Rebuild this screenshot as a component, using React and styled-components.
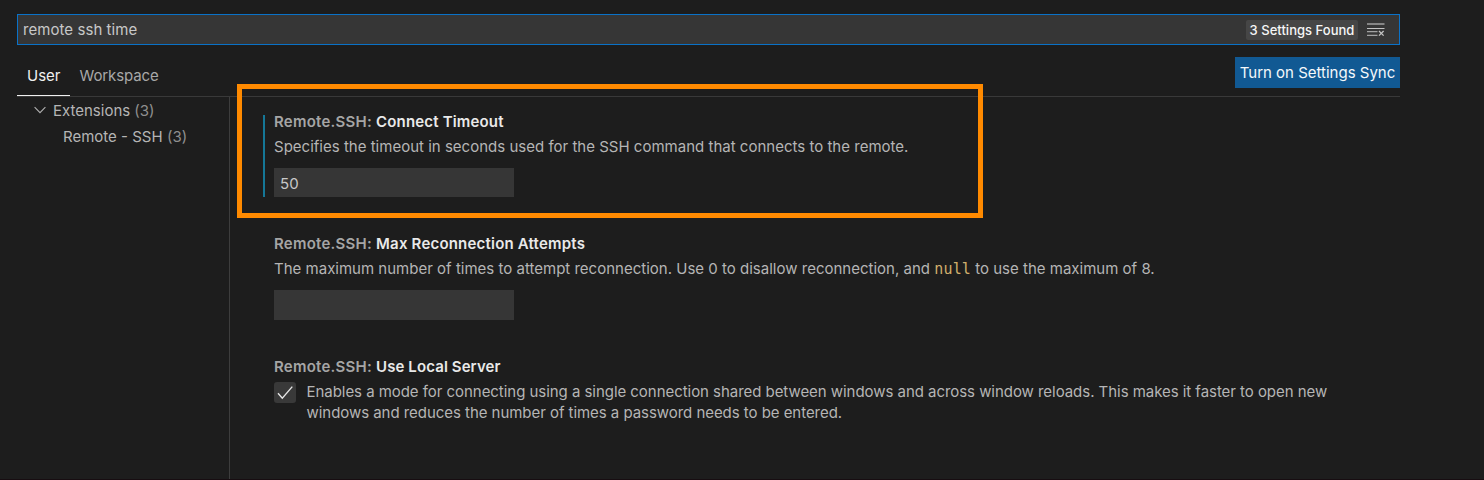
import React from "react";
import styled, { createGlobalStyle } from "styled-components";

const GlobalStyle = createGlobalStyle`
  *, *::before, *::after { box-sizing: border-box; }
  body {
    margin: 0;
    background: #1d1d1d;
    color: #b5b5b5;
    font: 400 15px/21px Inter, "Liberation Sans", sans-serif;
  }
`;

const Page = styled.div`
  position: relative;
  display: flex;
  flex-direction: column;
  width: 1484px;
  height: 480px;
  padding: 14px 84px 0 17px;
  overflow: hidden;
  border-bottom: 1px solid #170d11;
`;

const SearchBar = styled.div`
  display: flex;
  align-items: center;
  flex: none;
  height: 31px;
  padding: 0 14px 0 5px;
  background: #363636;
  border: 1px solid #0a72c8;
`;

const Query = styled.span`
  flex: 1;
  color: #c8c8c8;
  letter-spacing: 0.06px;
`;

const CountBadge = styled.span`
  width: 112px;
  height: 20px;
  margin-right: 9px;
  border-radius: 2px;
  background: #464646;
  color: #f6f6f6;
  font-size: 13px;
  font-weight: 500;
  line-height: 20px;
  letter-spacing: 0.02px;
  text-align: center;
  white-space: nowrap;
`;

const Header = styled.div`
  display: flex;
  justify-content: space-between;
  flex: none;
  height: 52px;
  padding-top: 12px;
  border-bottom: 1px solid #393939;
`;

const Tabs = styled.div`
  display: flex;
`;

const Tab = styled.div`
  height: 39px;
  padding: 8px ${(p) => (p.$active ? "10px" : "9px")} 0;
  letter-spacing: ${(p) => (p.$active ? "0" : "-0.1px")};
  color: ${(p) => (p.$active ? "#f0f0f0" : "#a8a8a8")};
  border-bottom: 1px solid ${(p) => (p.$active ? "#f0f0f0" : "transparent")};
`;

const SyncButton = styled.button`
  width: 165px;
  height: 31px;
  padding: 0;
  border: 0;
  background: #115993;
  color: #f4f8fb;
  font: inherit;
  white-space: nowrap;
`;

const Body = styled.div`
  display: flex;
  flex: 1;
`;

const Sidebar = styled.nav`
  width: 213px;
  border-right: 1px solid #3d3d3d;
`;

const TreeRow = styled.div`
  display: flex;
  align-items: center;
  height: 26px;
  padding-left: ${(p) => p.$indent}px;
  white-space: nowrap;
`;

const Chevron = styled.svg`
  width: 12px;
  height: 8px;
  margin-right: 7px;
`;

const Count = styled.span`
  margin-left: ${(p) => p.$gap || 4}px;
  color: #8f8f8f;
`;

const Settings = styled.main`
  flex: 1;
  padding: 14px 0 0 33px;
`;

const Setting = styled.section`
  display: flex;
  height: ${(p) => p.$height}px;
`;

const ModifiedMark = styled.div`
  width: 2px;
  height: 82px;
  margin: 4px 9px 0 0;
  background: ${(p) => (p.$on ? "#157797" : "transparent")};
`;

const Content = styled.div`
  flex: 1;
`;

const Title = styled.h3`
  margin: 0 0 4px;
  font-size: 15px;
  font-weight: 600;
  line-height: 21px;
  letter-spacing: 0.24px;
  color: #a5a5a5;
`;

const Name = styled.span`
  color: #e9e9e9;
  letter-spacing: ${(p) => p.$tracking}px;
`;

const Description = styled.p`
  margin: 0;
  letter-spacing: ${(p) => p.$tracking || 0}px;
  white-space: nowrap;
`;

const Code = styled.code`
  font: 15px/1 "DejaVu Sans Mono", monospace;
  letter-spacing: 0.15px;
  color: #d0ae6c;
`;

const Field = styled.div`
  width: 240px;
  height: ${(p) => p.$height}px;
  margin-top: 11px;
  padding: 5px 6px 0;
  background: #363636;
  color: #c8c8c8;
  letter-spacing: 0.2px;
`;

const CheckRow = styled.div`
  display: flex;
`;

const Checkbox = styled.div`
  display: flex;
  width: 22px;
  height: 21px;
  margin: 1px 10.5px 0 0;
  border-radius: 3px;
  background: #393939;
`;

const Highlight = styled.div`
  position: absolute;
  left: 237px;
  top: 84px;
  width: 746px;
  height: 134px;
  border: 5px solid #ff8a00;
  pointer-events: none;
`;

function ClearFilterIcon() {
  return (
    <svg width="18" height="14" viewBox="0 0 18 14" fill="none">
      <path d="M0 1h17.5" stroke="#858585" strokeWidth="2" />
      <path d="M0 5.5h17.5" stroke="#c2c2c2" />
      <path d="M0 8.7h10.5M0 12.3h10.5" stroke="#a2a2a2" strokeWidth="1.3" />
      <path d="M12 8l4.6 4.6M16.6 8l-4.6 4.6" stroke="#c4c4c4" strokeWidth="1.3" />
    </svg>
  );
}

function SettingTitle({ children, tracking = 0.17 }) {
  return (
    <Title>
      Remote.SSH: <Name $tracking={tracking}>{children}</Name>
    </Title>
  );
}

export default function App() {
  return (
    <>
      <GlobalStyle />
      <Page>
        <SearchBar>
          <Query>remote ssh time</Query>
          <CountBadge>3 Settings Found</CountBadge>
          <ClearFilterIcon />
        </SearchBar>
        <Header>
          <Tabs>
            <Tab $active>User</Tab>
            <Tab>Workspace</Tab>
          </Tabs>
          <SyncButton>Turn on Settings Sync</SyncButton>
        </Header>
        <Body>
          <Sidebar>
            <TreeRow $indent={17}>
              <Chevron viewBox="0 0 12 8" fill="none">
                <path d="M.6 1.2L6 6.7l5.4-5.5" stroke="#b0b0b0" strokeWidth="1.1" />
              </Chevron>
              Extensions<Count>(3)</Count>
            </TreeRow>
            <TreeRow $indent={46}>
              Remote - SSH<Count $gap={4.5}>(3)</Count>
            </TreeRow>
          </Sidebar>
          <Settings>
            <Setting $height={122}>
              <ModifiedMark $on />
              <Content>
                <SettingTitle>Connect Timeout</SettingTitle>
                <Description $tracking={0.01}>
                  Specifies the timeout in seconds used for the SSH command that connects to the remote.
                </Description>
                <Field $height={29}>50</Field>
              </Content>
            </Setting>
            <Setting $height={123}>
              <ModifiedMark />
              <Content>
                <SettingTitle tracking={0.2}>Max Reconnection Attempts</SettingTitle>
                <Description $tracking={0.008}>
                  The maximum number of times to attempt reconnection. Use 0 to disallow reconnection, and{" "}
                  <Code>null</Code> to use the maximum of 8.
                </Description>
                <Field $height={30} />
              </Content>
            </Setting>
            <Setting $height={90}>
              <ModifiedMark />
              <Content>
                <SettingTitle tracking={0.1}>Use Local Server</SettingTitle>
                <CheckRow>
                  <Checkbox>
                    <svg width="22" height="21" viewBox="0 0 22 21" fill="none">
                      <path d="M4 11.2l4.3 5L18.3 4.6" stroke="#e6e6e6" strokeWidth="1.4" />
                    </svg>
                  </Checkbox>
                  <Description $tracking={-0.045}>
                    Enables a mode for connecting using a single connection shared between windows and across window reloads. This makes it faster to open new
                    <br />
                    windows and reduces the number of times a password needs to be entered.
                  </Description>
                </CheckRow>
              </Content>
            </Setting>
          </Settings>
        </Body>
        <Highlight />
      </Page>
    </>
  );
}
